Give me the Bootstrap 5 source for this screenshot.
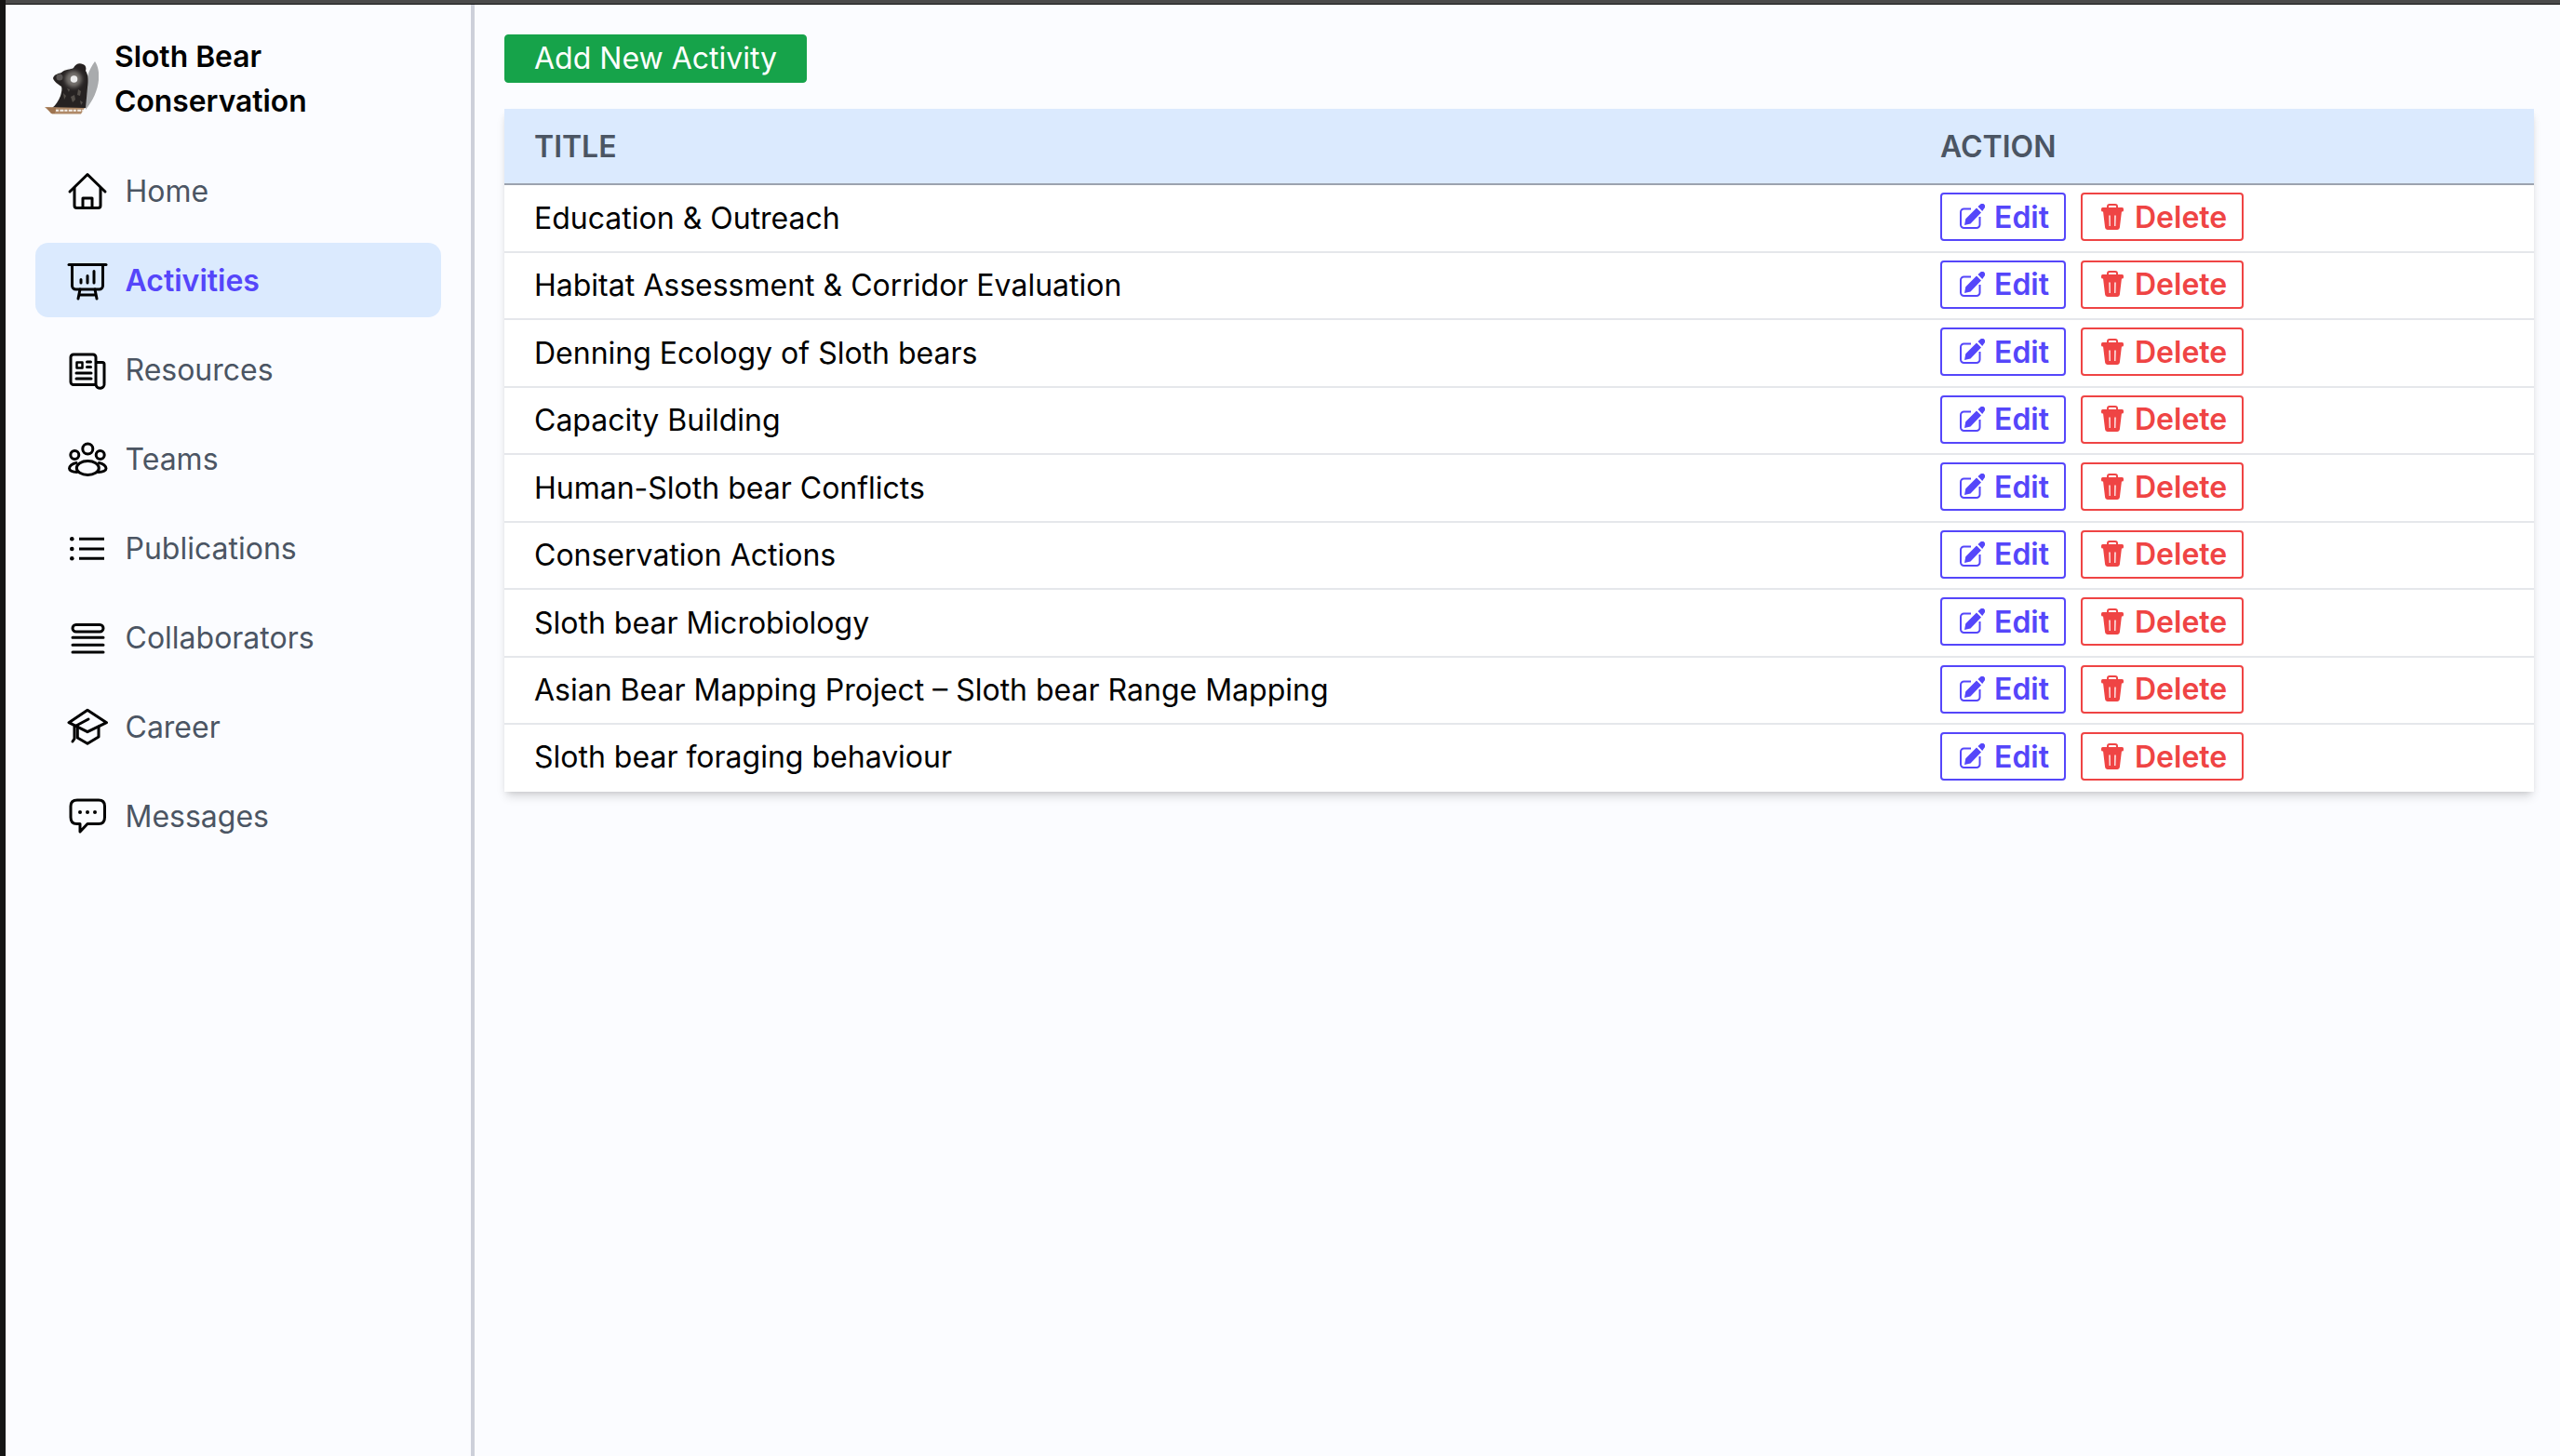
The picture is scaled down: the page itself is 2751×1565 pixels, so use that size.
<!DOCTYPE html>
<html lang="en">
<head>
<meta charset="utf-8">
<title>Sloth Bear Conservation</title>
<link rel="stylesheet" href="https://cdn.jsdelivr.net/npm/bootstrap@5.3.0/dist/css/bootstrap.min.css">
<style>
html,body{height:100%}
body{font-family:"Inter","Liberation Sans",sans-serif;background:#fbfcff;color:#000;font-size:32px;min-height:1565px}
.top-strip{height:5px;background:linear-gradient(#4a4a4a 4px,#111 4px);margin-left:6px}
.left-strip{border-left:6px solid #151515;min-height:1565px}
.page-wrap{margin-top:-5px}
.top-gap{padding-top:5px}
.side-panel{width:504px;flex:none;border-right:4px solid #cdd0da;padding:32px 32px 0}
.brand-row{padding-left:10px;gap:17px;margin-bottom:32px;height:96px}
.brand-logo{width:58px;height:58px;flex:none;margin-top:17px}
.brand-text{font-size:31.8px;font-weight:600;line-height:48px;color:#000;white-space:normal;padding:0;margin:0}
.side-nav{gap:16px}
.side-nav .nav-link{height:80px;padding:1px 0 0 35px;display:flex;align-items:center;gap:19.5px;color:#4b5563;font-size:32px;border-radius:14px;line-height:1}
.side-nav .nav-link.active{background:#dbeafe;color:#5546fa;font-weight:600}
.nav-ico{width:42px;height:42px;flex:none;overflow:visible;fill:none;stroke:#000;stroke-width:3;stroke-linecap:round;stroke-linejoin:round}
.nav-ico .dotted{fill:#000;stroke:none}
.main-pane{padding:32px 28px 0 32px;min-width:0}
.add-btn{--bs-btn-bg:#16a34a;--bs-btn-border-color:#16a34a;--bs-btn-hover-bg:#16a34a;font-size:32px;height:52px;padding:0 31px;line-height:50px;border-radius:4px;margin-bottom:28px;font-weight:400}
.data-table{--bs-table-bg:#fff;margin:0;box-shadow:0 7px 10px -2px rgba(0,0,0,.14),0 3px 6px -3px rgba(0,0,0,.12);table-layout:fixed;width:100%;border-collapse:collapse}
.data-table thead th{background:#dbeafe;color:#4b5563;font-weight:600;font-size:32px;height:81px;padding:2px 32px 0;border-bottom:2px solid #9ca3af;vertical-align:middle;line-height:1}
.data-table tbody td{padding:8px 32px 10.5px;border-bottom:2px solid #e5e7eb;vertical-align:middle;font-size:32px;color:#000;line-height:1}
.data-table tbody td.title-cell{padding-top:10px;padding-bottom:9px}
.data-table tbody tr:last-child td{border-bottom:0;padding-bottom:11.5px}
.action-col{width:670px}
.act-btn{height:52px;border-width:2px;border-radius:4px;font-size:32px;font-weight:600;display:inline-flex;align-items:center;padding:1px 0 0 19px;line-height:1;background:#fff;vertical-align:top}
.act-edit{--bs-btn-color:#5546fa;--bs-btn-border-color:#5546fa;--bs-btn-hover-bg:#fff;--bs-btn-hover-color:#5546fa;--bs-btn-hover-border-color:#5546fa;width:135px;gap:10px}
.act-del{--bs-btn-color:#ef4444;--bs-btn-border-color:#ef4444;--bs-btn-hover-bg:#fff;--bs-btn-hover-color:#ef4444;--bs-btn-hover-border-color:#ef4444;margin-left:16px;width:175px;gap:12px;padding-left:20px}
.ico-edit{width:27px;height:27px;flex:none;margin-top:-2px}
.ico-trash{width:24px;height:28px;flex:none;margin-top:-2px}
</style>
</head>
<body>
<svg width="0" height="0" class="position-absolute">
<defs>
<symbol id="sym-edit" viewBox="0 0 27 27">
<path d="M12 5.500H4.500a3.500 3.500 0 0 0-3.500 3.500v13.500a3.500 3.500 0 0 0 3.500 3.500h13.500a3.500 3.500 0 0 0 3.500-3.500V14" fill="none" stroke="currentColor" stroke-width="2"/>
<path d="M19.500 3 22 .8a2.800 2.800 0 0 1 4.300 4.200L24.200 8zM18 4.500l5 5-11.500 12-6.500 1.500 1.300-6.800z" fill="currentColor"/>
</symbol>
<symbol id="sym-trash" viewBox="0 0 24 28">
<path d="M7 5V3a2 2 0 0 1 2-2h6a2 2 0 0 1 2 2v2" fill="none" stroke="currentColor" stroke-width="2"/>
<rect x="0" y="4" width="24" height="4.500" rx="1.500" fill="currentColor"/>
<path fill-rule="evenodd" d="M2 8h20L19.900 25.600A2.600 2.600 0 0 1 17.300 28H6.700a2.600 2.600 0 0 1-2.600-2.400zM8.300 12.500l.3 11.500h1.200l-.1-11.500zM14.300 12.500l-.1 11.500h1.200l.3-11.500z" fill="currentColor"/>
</symbol>
</defs>
</svg>
<div class="top-strip"></div>
<div class="left-strip page-wrap top-gap d-flex">
  <aside class="side-panel">
    <div class="brand-row d-flex align-items-center">
      <svg class="brand-logo" viewBox="48 65 58 58" aria-label="logo">
        <defs>
          <filter id="soft" x="-10%" y="-10%" width="120%" height="120%"><feGaussianBlur stdDeviation="0.7"/></filter>
          <filter id="softer" x="-50%" y="-50%" width="200%" height="200%"><feGaussianBlur stdDeviation="2"/></filter>
        </defs>
        <path d="M102 66C105 70 107 78 106 86 105 97 100 108 92 118 91 105 92 92 94 82 96 75 99 70 102 66z" fill="#a9abad" filter="url(#soft)"/>
        <path d="M57 84C58 80 63 79 66 78 70 74 76 75 79 73 81 69 85 67 89 69 92 70 93 73 92 76 95 80 95 88 94 94L92 116H56C60 113 63 108 65 103 66 99 67 96 66 93 63 91 58 88 57 84z" fill="#262320" filter="url(#soft)"/>
        <circle cx="64" cy="83" r="3.500" fill="#5a5754" filter="url(#soft)"/>
        <circle cx="79" cy="85" r="9" fill="#77736f" filter="url(#softer)"/>
        <circle cx="79.500" cy="85" r="3.800" fill="#ececec" filter="url(#soft)"/>
        <path d="M68 100l3 3-2 4zM76 104l4-2 1 5-3 3zM84 96l3 2-1 5-3-1zM72 95l3 1-1 3zM86 108l3 2-2 3z" fill="#55504b"/>
        <path d="M48 115 91 116 87 122.500H56z" fill="#b08a68"/>
        <path d="M50 115.500 60 116 59 122 55 122z" fill="#9e7450"/>
        <path d="M60 118.800H90" stroke="#f3efe9" stroke-width="2" stroke-dasharray="3 1.400 4 1"/>
      </svg>
      <p class="brand-text">Sloth Bear Conservation</p>
    </div>
    <nav class="nav side-nav flex-column">
      <a class="nav-link" href="#"><svg class="nav-ico" viewBox="0 0 42 42"><path d="M2 21 21 2.500 40 21"/><path d="M7 17v19a2.500 2.500 0 0 0 2.500 2.500h23a2.500 2.500 0 0 0 2.500-2.500V17"/><path d="M16 38.500V28h10v10.500"/></svg><span>Home</span></a>
      <a class="nav-link active" href="#"><svg class="nav-ico" viewBox="0 0 42 42"><path d="M1 3.500h40"/><path d="M4.500 3.500V26a4 4 0 0 0 4 4h25a4 4 0 0 0 4-4V3.500"/><path d="M14 19.500V23M21 15.500V23M28 10.500V23"/><path d="M13 30l-2 10M29 30l2 10M12 36h18"/></svg><span>Activities</span></a>
      <a class="nav-link" href="#"><svg class="nav-ico" viewBox="0 0 42 42"><path d="M30 36.500H6a3 3 0 0 1-3-3V7a3 3 0 0 1 3-3h21a3 3 0 0 1 3 3v29.500a4.500 4.500 0 0 0 9-1.500V14.500a2 2 0 0 0-2-2h-7"/><path d="M9.500 12.500h6v6h-6z" stroke-width="2.500"/><path d="M20.500 12h4M20.500 17.500h4M9 24h16M9 30h16"/></svg><span>Resources</span></a>
      <a class="nav-link" href="#"><svg class="nav-ico" viewBox="0 0 42 42"><circle cx="21.300" cy="9.500" r="5.500"/><circle cx="7.300" cy="16" r="4.500"/><circle cx="34.700" cy="16" r="4.500"/><ellipse cx="21.300" cy="30" rx="12" ry="7.500"/><path d="M9 24.500C4.500 25 1.500 28.500 1.500 30.500S4.500 34.500 9.500 34.500M33.500 24.500C38 25 41 28.500 41 30.500S38 34.500 33 34.500"/></svg><span>Teams</span></a>
      <a class="nav-link" href="#"><svg class="nav-ico" viewBox="0 0 42 42"><circle class="dotted" cx="4.300" cy="10.300" r="2.300"/><circle class="dotted" cx="4.300" cy="21" r="2.300"/><circle class="dotted" cx="4.300" cy="31.300" r="2.300"/><path d="M12 10.300h27M12 21h27M12 31.300h27" stroke-linecap="butt"/></svg><span>Publications</span></a>
      <a class="nav-link" href="#"><svg class="nav-ico" viewBox="0 0 42 42"><rect x="5" y="6.500" width="33" height="7.500" rx="3.700"/><path d="M5 20.300h33M5 28.300h33M5 36h33"/></svg><span>Collaborators</span></a>
      <a class="nav-link" href="#"><svg class="nav-ico" viewBox="0 0 42 42"><path d="M21 2.300 1 15.700l20 10 20.500-10z"/><path d="M10.300 20v12L21 38.300 33 31V20"/><path d="M22 12 7 20v13l-2 3"/></svg><span>Career</span></a>
      <a class="nav-link" href="#"><svg class="nav-ico" viewBox="0 0 42 42"><path d="M10 3h23c4.500 0 6.500 2.500 6.500 6.500v12c0 4.500-2 7-6.500 7H21l-8 8.500v-8.500H9.500C5 28.500 3 26 3 21.500v-12C3 5.500 5 3 10 3z"/><circle class="dotted" cx="13" cy="16" r="2"/><circle class="dotted" cx="21" cy="16" r="2"/><circle class="dotted" cx="29" cy="16" r="2"/></svg><span>Messages</span></a>
    </nav>
  </aside>
  <main class="main-pane flex-grow-1">
    <button type="button" class="btn btn-success add-btn d-block">Add New Activity</button>
    <table class="table data-table">
      <thead><tr><th>TITLE</th><th class="action-col">ACTION</th></tr></thead>
      <tbody>
        <tr><td class="title-cell">Education &amp; Outreach</td><td><a class="btn act-btn act-edit" href="#"><svg class="ico-edit"><use href="#sym-edit"/></svg>Edit</a><a class="btn act-btn act-del" href="#"><svg class="ico-trash"><use href="#sym-trash"/></svg>Delete</a></td></tr>
        <tr><td class="title-cell">Habitat Assessment &amp; Corridor Evaluation</td><td><a class="btn act-btn act-edit" href="#"><svg class="ico-edit"><use href="#sym-edit"/></svg>Edit</a><a class="btn act-btn act-del" href="#"><svg class="ico-trash"><use href="#sym-trash"/></svg>Delete</a></td></tr>
        <tr><td class="title-cell">Denning Ecology of Sloth bears</td><td><a class="btn act-btn act-edit" href="#"><svg class="ico-edit"><use href="#sym-edit"/></svg>Edit</a><a class="btn act-btn act-del" href="#"><svg class="ico-trash"><use href="#sym-trash"/></svg>Delete</a></td></tr>
        <tr><td class="title-cell">Capacity Building</td><td><a class="btn act-btn act-edit" href="#"><svg class="ico-edit"><use href="#sym-edit"/></svg>Edit</a><a class="btn act-btn act-del" href="#"><svg class="ico-trash"><use href="#sym-trash"/></svg>Delete</a></td></tr>
        <tr><td class="title-cell">Human-Sloth bear Conflicts</td><td><a class="btn act-btn act-edit" href="#"><svg class="ico-edit"><use href="#sym-edit"/></svg>Edit</a><a class="btn act-btn act-del" href="#"><svg class="ico-trash"><use href="#sym-trash"/></svg>Delete</a></td></tr>
        <tr><td class="title-cell">Conservation Actions</td><td><a class="btn act-btn act-edit" href="#"><svg class="ico-edit"><use href="#sym-edit"/></svg>Edit</a><a class="btn act-btn act-del" href="#"><svg class="ico-trash"><use href="#sym-trash"/></svg>Delete</a></td></tr>
        <tr><td class="title-cell">Sloth bear Microbiology</td><td><a class="btn act-btn act-edit" href="#"><svg class="ico-edit"><use href="#sym-edit"/></svg>Edit</a><a class="btn act-btn act-del" href="#"><svg class="ico-trash"><use href="#sym-trash"/></svg>Delete</a></td></tr>
        <tr><td class="title-cell">Asian Bear Mapping Project – Sloth bear Range Mapping</td><td><a class="btn act-btn act-edit" href="#"><svg class="ico-edit"><use href="#sym-edit"/></svg>Edit</a><a class="btn act-btn act-del" href="#"><svg class="ico-trash"><use href="#sym-trash"/></svg>Delete</a></td></tr>
        <tr><td class="title-cell">Sloth bear foraging behaviour</td><td><a class="btn act-btn act-edit" href="#"><svg class="ico-edit"><use href="#sym-edit"/></svg>Edit</a><a class="btn act-btn act-del" href="#"><svg class="ico-trash"><use href="#sym-trash"/></svg>Delete</a></td></tr>
      </tbody>
    </table>
  </main>
</div>
<script src="https://cdn.jsdelivr.net/npm/bootstrap@5.3.0/dist/js/bootstrap.bundle.min.js"></script>
</body>
</html>
